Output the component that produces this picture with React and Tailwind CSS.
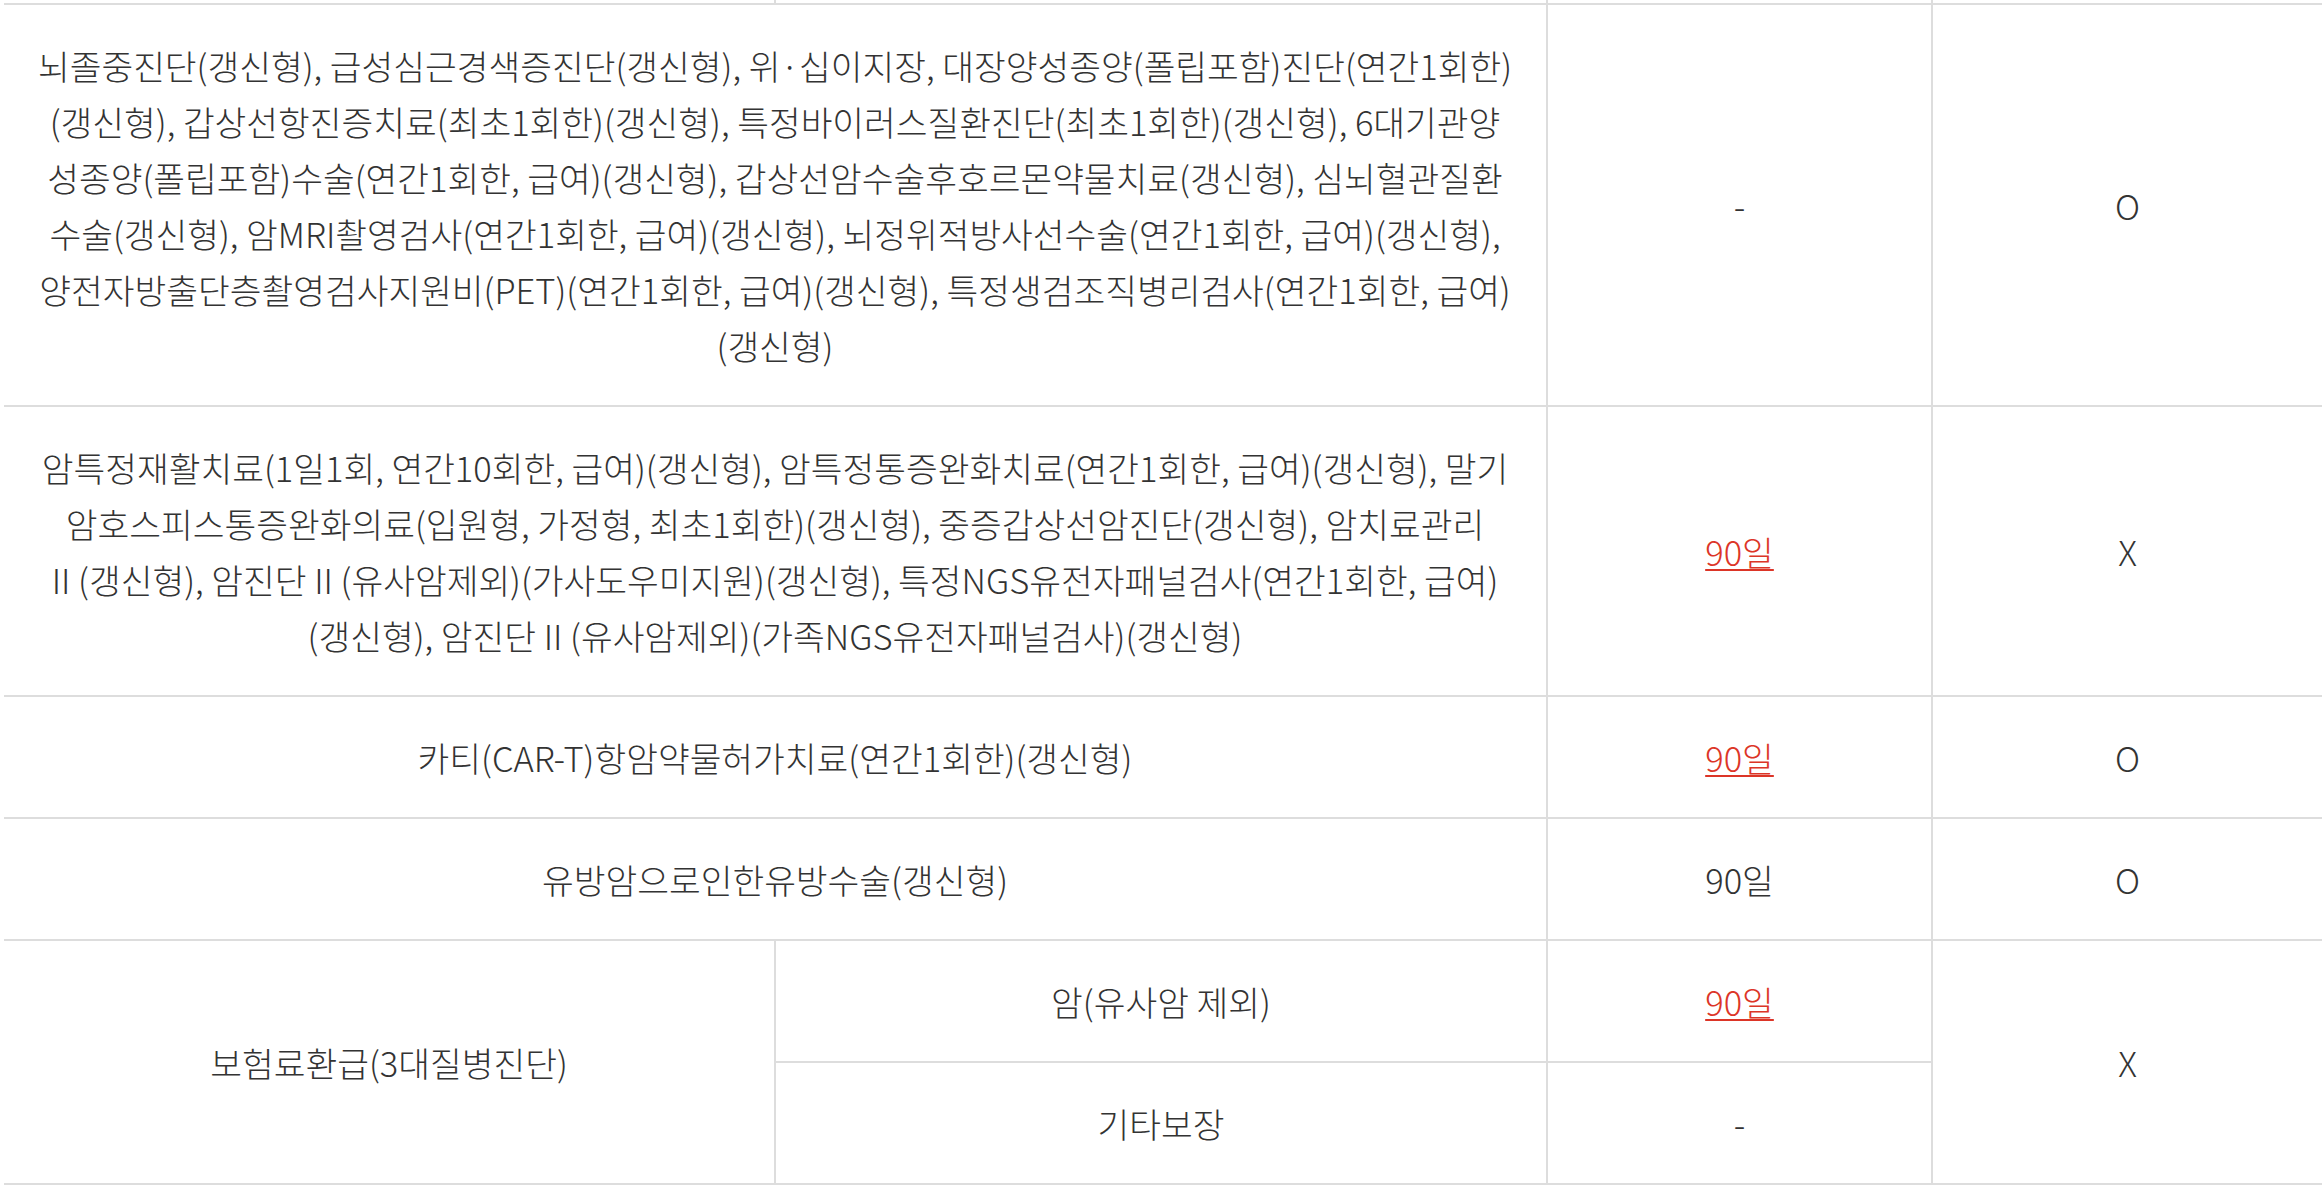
const FONT = { fontFamily: '"Noto Sans CJK KR", "Noto Sans", sans-serif' };

const cell = "bg-white flex flex-col items-center justify-center text-center py-8 px-[20px]";

const ROW1 = [
  '뇌졸중진단(갱신형), 급성심근경색증진단(갱신형), 위·십이지장, 대장양성종양(폴립포함)진단(연간1회한)',
  '(갱신형), 갑상선항진증치료(최초1회한)(갱신형), 특정바이러스질환진단(최초1회한)(갱신형), 6대기관양',
  '성종양(폴립포함)수술(연간1회한, 급여)(갱신형), 갑상선암수술후호르몬약물치료(갱신형), 심뇌혈관질환',
  '수술(갱신형), 암MRI촬영검사(연간1회한, 급여)(갱신형), 뇌정위적방사선수술(연간1회한, 급여)(갱신형),',
  '양전자방출단층촬영검사지원비(PET)(연간1회한, 급여)(갱신형), 특정생검조직병리검사(연간1회한, 급여)',
  '(갱신형)',
];

const ROW2 = [
  '암특정재활치료(1일1회, 연간10회한, 급여)(갱신형), 암특정통증완화치료(연간1회한, 급여)(갱신형), 말기',
  '암호스피스통증완화의료(입원형, 가정형, 최초1회한)(갱신형), 중증갑상선암진단(갱신형), 암치료관리',
  'II (갱신형), 암진단 II (유사암제외)(가사도우미지원)(갱신형), 특정NGS유전자패널검사(연간1회한, 급여)',
  '(갱신형), 암진단 II (유사암제외)(가족NGS유전자패널검사)(갱신형)',
];

function Lines({ lines }) {
  return lines.map((l, i) => (
    <span key={i} className="block whitespace-nowrap">{l}</span>
  ));
}

function Red({ children }) {
  return <span className="text-[#dc3527] underline decoration-2 underline-offset-[3px]">{children}</span>;
}

export default function App() {
  return (
    <div className="bg-white min-h-[1186px] w-[2322px] pl-[4px]" style={FONT}>
      <div className="grid grid-cols-[770px_770px_383px_389px] gap-[2px] bg-[#dddddd] pb-[2px] text-[34.5px] leading-[56px] font-light text-[#333]">
        {/* tail of the previous row */}
        <div className="bg-white h-[3px]" />
        <div className="bg-white h-[3px]" />
        <div className="bg-white h-[3px]" />
        <div className="bg-white h-[3px]" />

        <div className={cell + " col-span-2"}>
          <Lines lines={ROW1} />
        </div>
        <div className={cell}>-</div>
        <div className={cell}>O</div>

        <div className={cell + " col-span-2"}>
          <Lines lines={ROW2} />
        </div>
        <div className={cell}><Red>90일</Red></div>
        <div className={cell}>X</div>

        <div className={cell + " col-span-2"}>카티(CAR-T)항암약물허가치료(연간1회한)(갱신형)</div>
        <div className={cell}><Red>90일</Red></div>
        <div className={cell}>O</div>

        <div className={cell + " col-span-2"}>유방암으로인한유방수술(갱신형)</div>
        <div className={cell}>90일</div>
        <div className={cell}>O</div>

        <div className={cell + " row-span-2"}>보험료환급(3대질병진단)</div>
        <div className={cell}>암(유사암 제외)</div>
        <div className={cell}><Red>90일</Red></div>
        <div className={cell + " row-span-2"}>X</div>

        <div className={cell}>기타보장</div>
        <div className={cell}>-</div>
      </div>
    </div>
  );
}
